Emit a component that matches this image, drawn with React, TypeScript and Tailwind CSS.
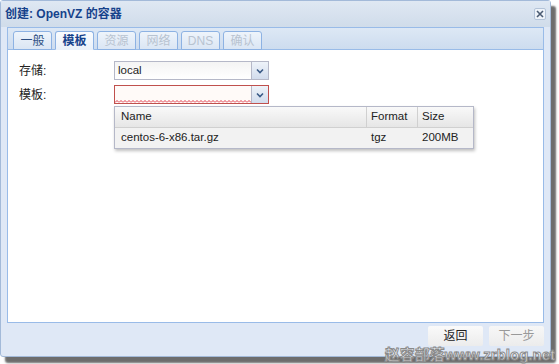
import React from 'react';

const cjk = "font-['Liberation_Sans','Noto_Sans_CJK_SC',sans-serif]";

const tabs = [
  { label: '一般', state: 'normal' },
  { label: '模板', state: 'active' },
  { label: '资源', state: 'disabled' },
  { label: '网络', state: 'disabled' },
  { label: 'DNS', state: 'disabled' },
  { label: '确认', state: 'disabled' },
];

const Trigger: React.FC = () => (
  <div className="w-[17px] h-full border-l border-[#b5b8c8] bg-gradient-to-b from-[#eef3f9] to-[#d2dced] flex items-center justify-center">
    <svg width="8" height="6" viewBox="0 0 8 6">
      <path d="M1 1.5 L4 4.5 L7 1.5" fill="none" stroke="#3a5a86" strokeWidth="1.6" />
    </svg>
  </div>
);

const App: React.FC = () => {
  return (
    <div className={`w-[559px] h-[364px] bg-white relative overflow-hidden ${cjk}`}>
      <div className="w-[551px] h-[357px] flex flex-col bg-[#dfe8f6] border border-[#a3bad9] rounded-[3px] shadow-[5px_6px_2px_rgba(60,60,60,0.75)]">
        {/* title bar */}
        <div className="h-[26px] shrink-0 flex items-center justify-between pl-[4px] pr-[4px] bg-gradient-to-b from-[#dfe8f3] to-[#d0dcea]">
          <span className="text-[12px] font-bold text-[#15428b] leading-none">创建: OpenVZ 的容器</span>
          <div className="w-[12px] h-[12px] border border-[#b3c3d8] bg-[#eef3f9] rounded-[2px] flex items-center justify-center">
            <svg width="8" height="8" viewBox="0 0 8 8">
              <path d="M1 1 L7 7 M7 1 L1 7" stroke="#4a5b72" strokeWidth="1.6" />
            </svg>
          </div>
        </div>

        {/* tab panel */}
        <div className="mx-[6px] flex-1 flex flex-col border border-[#99bbe8] bg-white">
          <div className="h-[22px] shrink-0 flex items-end gap-[3px] pl-[5px] bg-gradient-to-b from-[#dde8f5] to-[#cddcef] border-b border-[#99bbe8]">
            {tabs.map((t) => (
              <div
                key={t.label}
                className={`w-[39px] h-[19px] -mb-px flex items-center justify-center text-[12px] rounded-t-[3px] border border-[#8db2e3] ${
                  t.state === 'active'
                    ? 'font-bold bg-gradient-to-b from-[#fafcfe] to-[#eaf1fa] border-b-[#eaf1fa] text-[#15428b]'
                    : 'bg-gradient-to-b from-[#eef4fb] to-[#dbe6f4] ' + (t.state === 'normal' ? 'text-[#2d4f83]' : 'text-[#b8c3d0]')
                }`}
              >
                {t.label}
              </div>
            ))}
          </div>

          <div className="flex-1 relative bg-white pt-[11px] pl-[11px]">
            <div className="flex items-center h-[19px]">
              <span className="w-[95px] text-[12px] text-[#222]">存储:</span>
              <div className="w-[155px] h-[19px] flex border border-[#b5b8c8] bg-white">
                <div className="flex-1 pl-[3px] text-[11.5px] text-[#222] leading-[17px] bg-gradient-to-b from-[#f4f4f4] to-white">local</div>
                <Trigger />
              </div>
            </div>
            <div className="flex items-center h-[19px] mt-[5px]">
              <span className="w-[95px] text-[12px] text-[#222]">模板:</span>
              <div className="w-[155px] h-[19px] flex border border-[#c0504d] bg-white">
                <div className="flex-1 relative bg-[#fffaf8]">
                  <svg className="absolute left-0 bottom-0" width="100%" height="3">
                    <defs>
                      <pattern id="zz" width="4" height="3" patternUnits="userSpaceOnUse">
                        <path d="M0 2.5 L2 0.5 L4 2.5" fill="none" stroke="#d23" strokeWidth="0.9" />
                      </pattern>
                    </defs>
                    <rect width="100%" height="3" fill="url(#zz)" />
                  </svg>
                </div>
                <Trigger />
              </div>
            </div>

            {/* dropdown grid */}
            <div className="absolute left-[106px] top-[56px] w-[360px] border border-[#b5b8c8] bg-white shadow-[1px_2px_3px_rgba(0,0,0,0.25)] text-[11.5px] text-[#222]">
              <div className="flex h-[21px] items-center bg-gradient-to-b from-[#f9f9f9] to-[#e6e6e6] border-b border-[#d0d0d0]">
                <div className="w-[252px] pl-[6px] border-r border-[#d0d0d0] h-full flex items-center">Name</div>
                <div className="w-[51px] pl-[4px] border-r border-[#d0d0d0] h-full flex items-center">Format</div>
                <div className="flex-1 pl-[4px] h-full flex items-center">Size</div>
              </div>
              <div className="flex h-[20px] items-center bg-[#f2f2f2]">
                <div className="w-[252px] pl-[6px]">centos-6-x86.tar.gz</div>
                <div className="w-[51px] pl-[4px]">tgz</div>
                <div className="flex-1 pl-[4px]">200MB</div>
              </div>
            </div>
          </div>
        </div>

        {/* footer */}
        <div className="h-[33px] shrink-0 flex items-start pt-[3px] justify-end gap-[6px] pr-[6px]">
          <button className="w-[55px] h-[20px] text-[12px] leading-none text-[#222] rounded-[2px] bg-gradient-to-b from-[#fafafa] to-[#ececec]">返回</button>
          <button className="w-[55px] h-[20px] text-[12px] leading-none text-[#999] rounded-[2px] bg-gradient-to-b from-[#f7f7f7] to-[#ececec]">下一步</button>
        </div>
      </div>

      {/* watermark */}
      <div className="absolute right-[4px] bottom-[1px] h-[17px] text-[15px] font-bold leading-[17px] text-white/70 [-webkit-text-stroke:1px_#8a8a8a] font-['Liberation_Sans','Noto_Sans_CJK_SC',sans-serif]">
        赵容部落www.zrblog.net
      </div>
    </div>
  );
};

export default App;
